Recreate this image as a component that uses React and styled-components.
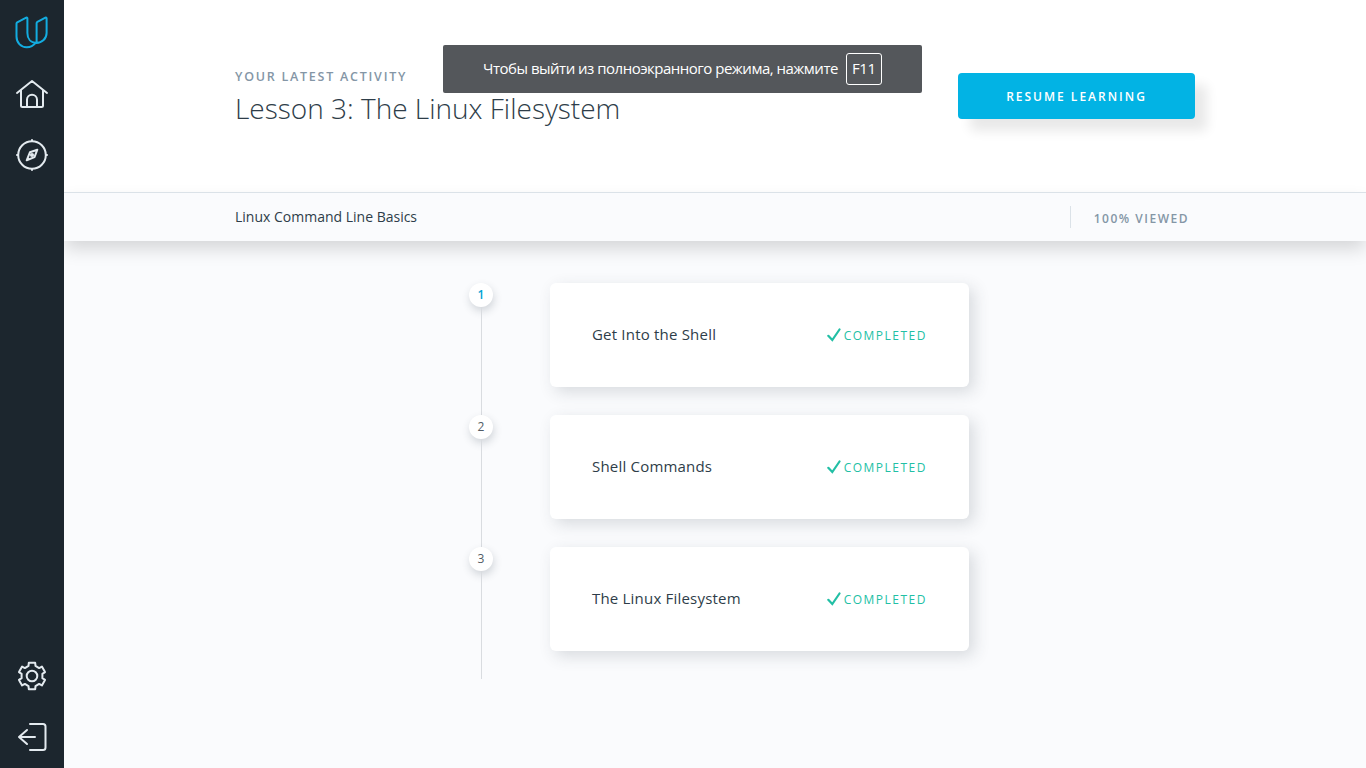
import React from 'react';
import styled, { createGlobalStyle } from 'styled-components';

const GlobalStyle = createGlobalStyle`
  * { box-sizing: border-box; }
  body { margin: 0; font-family: 'Open Sans', 'Noto Sans', sans-serif; color: #2e3d49; background: #fafbfd; }
  h1, h2, ol { margin: 0; padding: 0; font-weight: inherit; }
`;

const Shell = styled.div`
  display: flex;
  height: 100vh;
  overflow: hidden;
`;

const Sidebar = styled.nav`
  position: relative;
  z-index: 1;
  width: 64px;
  flex: none;
  display: flex;
  flex-direction: column;
  justify-content: space-between;
  padding: 10px 0 9px;
  background: #1c262e;
`;

const NavGroup = styled.div`
  display: flex;
  flex-direction: column;
  align-items: center;
  gap: 17px;
`;

const NavIcon = styled.svg`
  width: 44px;
  height: 44px;
  fill: none;
  stroke: ${({ $color }) => $color || '#e3eaef'};
  stroke-width: 2;
  stroke-linecap: round;
  stroke-linejoin: round;
`;

const Main = styled.main`
  flex: 1;
  display: flex;
  flex-direction: column;
`;

const Header = styled.header`
  height: 192px;
  padding: 0 171px;
  display: flex;
  justify-content: space-between;
  background: #fff;
`;

const Activity = styled.div`
  padding-top: 68px;
`;

const Eyebrow = styled.div`
  font-size: 12.5px;
  line-height: 18px;
  font-weight: 600;
  letter-spacing: 1.75px;
  color: #8496a6;
`;

const Title = styled.h1`
  margin-top: 2px;
  font-size: 28px;
  line-height: 40px;
  font-weight: 300;
`;

const ResumeButton = styled.button`
  width: 237px;
  height: 46px;
  margin-top: 73px;
  padding: 2px 0 0;
  border: 0;
  border-radius: 4px;
  background: #02b3e4;
  color: #fff;
  font: 600 12px/44px 'Open Sans', sans-serif;
  letter-spacing: 2px;
  box-shadow: 12px 12px 12px rgba(0, 0, 0, 0.09);
`;

const CourseBar = styled.section`
  height: 49px;
  padding: 0 177px 0 171px;
  border-top: 1px solid #dbe2e8;
  display: flex;
  justify-content: space-between;
  align-items: center;
  background: #fafbfd;
  box-shadow: 0 9px 18px -1px rgba(0, 0, 0, 0.15);
`;

const CourseName = styled.h2`
  font-size: 14px;
  line-height: 22px;
`;

const Viewed = styled.div`
  height: 22px;
  padding-left: 23px;
  border-left: 1px solid #dbe2e8;
  font-size: 12px;
  line-height: 26px;
  font-weight: 600;
  letter-spacing: 1.5px;
  color: #8496a6;
`;

const Lessons = styled.ol`
  width: 500px;
  margin: 42px 0 0 405px;
  list-style: none;
`;

const LessonRow = styled.li`
  display: flex;
  height: 132px;
`;

const Timeline = styled.div`
  width: 24px;
  margin-right: 57px;
  display: flex;
  flex-direction: column;
  align-items: center;
`;

const Step = styled.span`
  width: 24px;
  height: 24px;
  flex: none;
  border-radius: 50%;
  background: #fff;
  box-shadow: 1px 4px 8px rgba(46, 61, 73, 0.2);
  color: ${({ $active }) => ($active ? '#02a3d4' : '#525c65')};
  font-size: 12px;
  line-height: 24px;
  text-align: center;
  font-weight: ${({ $active }) => ($active ? 600 : 400)};
`;

const Rail = styled.span`
  width: 1px;
  flex: 1;
  margin-left: 1px;
  background: #d9dce0;
`;

const Card = styled.article`
  width: 419px;
  height: 104px;
  padding: 0 42px;
  display: flex;
  align-items: center;
  justify-content: space-between;
  background: #fff;
  border-radius: 6px;
  box-shadow: 5px 5px 16px rgba(46, 61, 73, 0.17);
`;

const LessonName = styled.span`
  padding-bottom: 2px;
  font-size: 15px;
  line-height: 24px;
  letter-spacing: 0.2px;
`;

const Status = styled.span`
  display: flex;
  align-items: center;
  gap: 3px;
  color: #22bfa5;
  font-size: 12px;
  font-weight: 500;
  line-height: 24px;
  letter-spacing: 1.5px;
  padding-top: 1px;
`;

const Check = styled.svg`
  width: 14px;
  height: 14px;
  margin-bottom: 2px;
  fill: none;
  stroke: currentColor;
  stroke-width: 2.2;
  stroke-linecap: round;
`;

const Toast = styled.div`
  position: absolute;
  top: 45px;
  left: 443px;
  z-index: 2;
  width: 479px;
  height: 48px;
  display: flex;
  align-items: center;
  justify-content: center;
  gap: 8px;
  border-radius: 2px;
  background: #54575b;
  color: #fff;
  font: 15px/20px 'Open Sans', 'Noto Sans', sans-serif;
  letter-spacing: -0.5px;
  white-space: nowrap;
`;

const Message = styled.span`
  padding-bottom: 2px;
`;

const Key = styled.kbd`
  width: 36px;
  height: 32px;
  border: 1px solid #fff;
  border-radius: 3px;
  font: inherit;
  line-height: 29px;
  letter-spacing: -0.3px;
  text-align: center;
`;

const lessons = ['Get Into the Shell', 'Shell Commands', 'The Linux Filesystem'];

export default function App() {
  return (
    <Shell>
      <GlobalStyle />
      <Sidebar>
        <NavGroup>
          <NavIcon viewBox="10 10 44 44" $color="#13ace0">
            <path d="M36 42.3c-2.300 3-5.500 4.900-9.300 4.900-6 0-10.200-4.500-10.200-10.700V23.600c0-.5.3-.9.7-1.200l9-4.800c.6-.3 1.200 0 1.200.7V33c0 6 3.400 9.900 9 9.900 5.600 0 10.200-4.200 10.200-9.900V18.300c0-.7-.6-1-1.200-.7l-8 4.300c-.5.3-.8.7-.8 1.300V41.500" />
          </NavIcon>
          <NavIcon viewBox="10 71 44 44">
            <path d="M17 93 32 81l15 12M21 90v15.500q0 1.500 1.500 1.500h19q1.500 0 1.500-1.500V90M27 107v-7.300a5 5 0 0 1 10 0v7.300" />
          </NavIcon>
          <NavIcon viewBox="10 132 44 44">
            <circle cx="32" cy="155" r="13.8" />
            <path d="M32 140v1M32 169v1M17 155h1M46 155h1M37.3 149.700l-7.400 2.600-3.200 8 7.800-3.200z" />
            <circle cx="32" cy="155" r="1.100" />
          </NavIcon>
        </NavGroup>
        <NavGroup>
          <NavIcon viewBox="-22 -22 44 44">
            <path d="M-3.200-13.200H3.200L3.500-10.100 7.100-7.900 9.900-9.400 13-3.900 10.400-2.200V2.200L13 3.900 9.900 9.400 7.100 7.900 3.500 10.100 3.200 13.200H-3.200L-3.500 10.100-7.100 7.900-9.900 9.400-13 3.900-10.400 2.200V-2.200L-13-3.900-9.900-9.400-7.100-7.900-3.500-10.100Z" />
            <circle r="5.300" />
          </NavIcon>
          <NavIcon viewBox="10 715 44 44">
            <path d="M30 724h13c1.600 0 2.500.9 2.500 2.500v21c0 1.600-.9 2.500-2.500 2.500H30M35 737H19M27 730l-8 7 8 7" />
          </NavIcon>
        </NavGroup>
      </Sidebar>
      <Main>
        <Header>
          <Activity>
            <Eyebrow>YOUR LATEST ACTIVITY</Eyebrow>
            <Title>Lesson 3: The Linux Filesystem</Title>
          </Activity>
          <ResumeButton>RESUME LEARNING</ResumeButton>
        </Header>
        <CourseBar>
          <CourseName>Linux Command Line Basics</CourseName>
          <Viewed>100% VIEWED</Viewed>
        </CourseBar>
        <Lessons>
          {lessons.map((name, index) => (
            <LessonRow key={name}>
              <Timeline>
                <Step $active={index === 0}>{index + 1}</Step>
                <Rail />
              </Timeline>
              <Card>
                <LessonName>{name}</LessonName>
                <Status>
                  <Check viewBox="0 0 14 14"><path d="m1.300 7.800 4 4.300L12.500 1.500" /></Check>
                  COMPLETED
                </Status>
              </Card>
            </LessonRow>
          ))}
        </Lessons>
      </Main>
      <Toast>
        <Message>Чтобы выйти из полноэкранного режима, нажмите</Message>
        <Key>F11</Key>
      </Toast>
    </Shell>
  );
}
